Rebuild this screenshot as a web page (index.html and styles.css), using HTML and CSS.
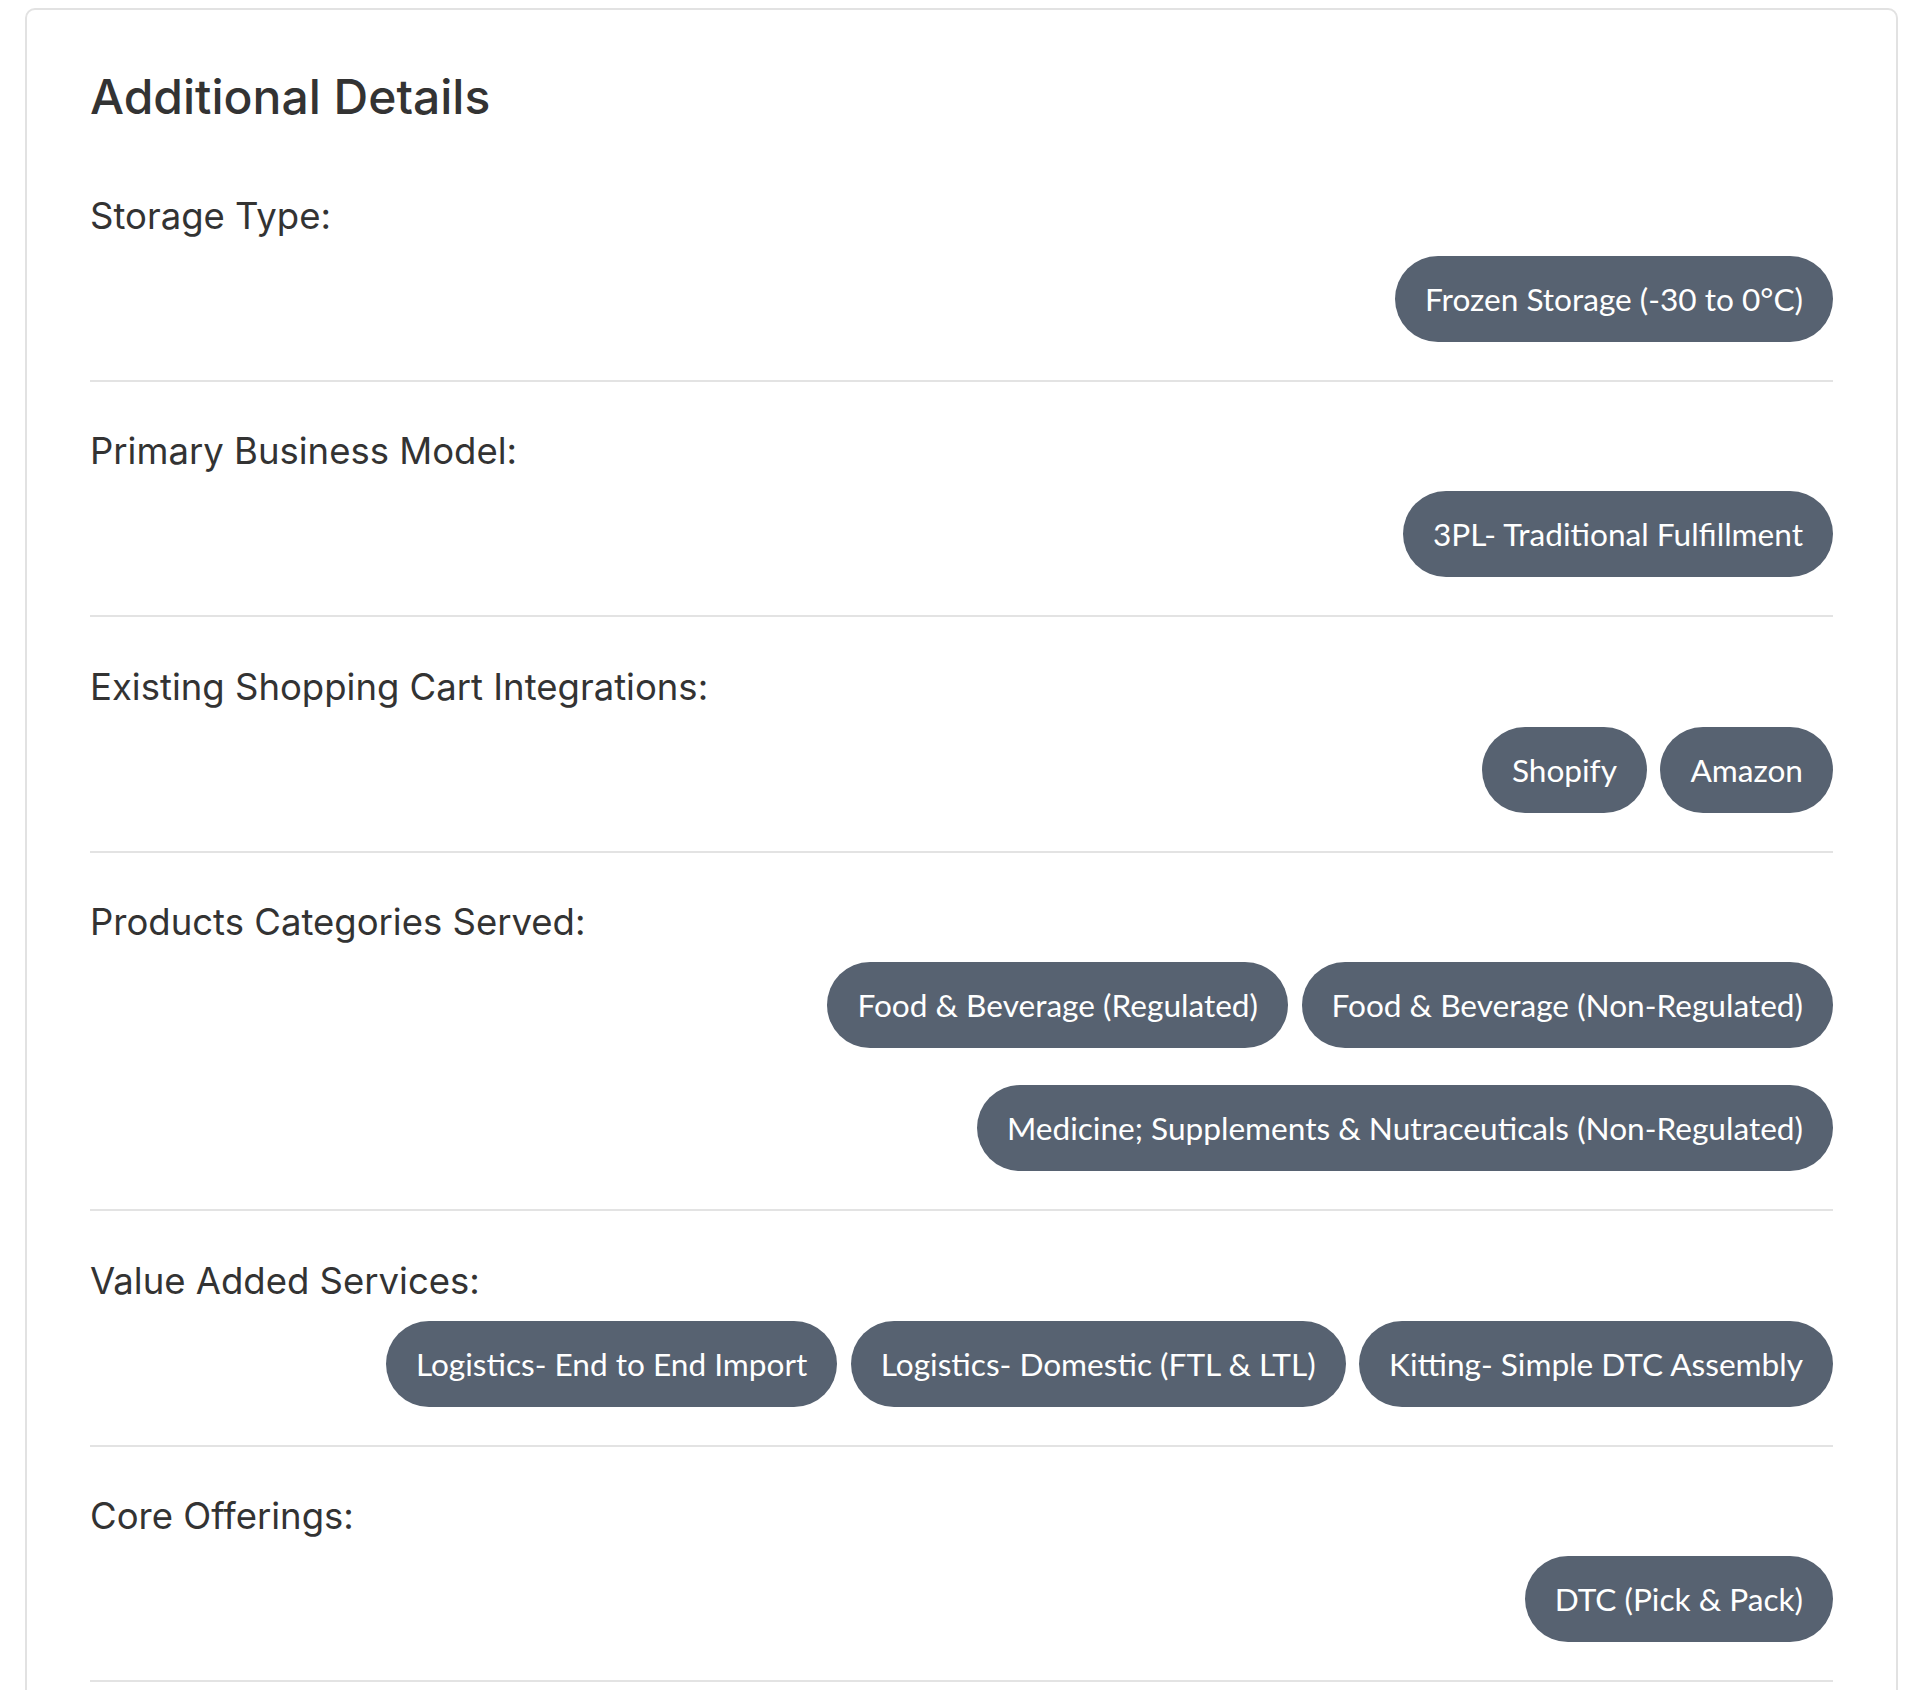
FILE: index.html
```html
<!DOCTYPE html>
<html lang="en">
<head>
<meta charset="utf-8">
<title>Additional Details</title>
<link rel="stylesheet" href="styles.css">
</head>
<body>
<div class="page">
  <div class="card">
    <h2 class="title">Additional Details</h2>

    <div class="section">
      <div class="label">Storage Type:</div>
      <div class="pills">
        <span class="pill">Frozen Storage (-30 to 0°C)</span>
      </div>
    </div>

    <div class="section">
      <div class="label">Primary Business Model:</div>
      <div class="pills">
        <span class="pill">3PL- Traditional Fulfillment</span>
      </div>
    </div>

    <div class="section">
      <div class="label">Existing Shopping Cart Integrations:</div>
      <div class="pills">
        <span class="pill">Shopify</span>
        <span class="pill">Amazon</span>
      </div>
    </div>

    <div class="section">
      <div class="label">Products Categories Served:</div>
      <div class="pills">
        <span class="pill">Food &amp; Beverage (Regulated)</span>
        <span class="pill">Food &amp; Beverage (Non-Regulated)</span>
        <span class="pill">Medicine; Supplements &amp; Nutraceuticals (Non-Regulated)</span>
      </div>
    </div>

    <div class="section">
      <div class="label">Value Added Services:</div>
      <div class="pills">
        <span class="pill">Logistics- End to End Import</span>
        <span class="pill">Logistics- Domestic (FTL &amp; LTL)</span>
        <span class="pill">Kitting- Simple DTC Assembly</span>
      </div>
    </div>

    <div class="section">
      <div class="label">Core Offerings:</div>
      <div class="pills">
        <span class="pill">DTC (Pick &amp; Pack)</span>
      </div>
    </div>
  </div>
</div>
</body>
</html>
```

FILE: styles.css
```css
* {
  box-sizing: border-box;
}

html, body {
  margin: 0;
  padding: 0;
  background: #ffffff;
}

body {
  font-family: "Inter", "Noto Sans", "DejaVu Sans", sans-serif;
  color: #333333;
}

.page {
  padding: 8px 22px 0 25px;
}

.card {
  border: 2px solid #e2e2e2;
  border-radius: 10px;
  padding: 0 63px 40px 63px;
  background: #ffffff;
}

.title {
  margin: 59px 0 21px 0;
  font-size: 48px;
  line-height: 56px;
  font-weight: 500;
  color: #333333;
  letter-spacing: 0;
}

.section {
  padding: 47.5px 0 38px 0;
  border-bottom: 2px solid #e3e3e3;
}

.label {
  font-size: 36.5px;
  line-height: 44px;
  font-weight: 400;
  color: #333333;
}

.pills {
  margin-top: 18px;
  display: flex;
  flex-wrap: wrap;
  justify-content: flex-end;
  column-gap: 13.5px;
  row-gap: 37px;
}

.pill {
  display: inline-flex;
  align-items: center;
  height: 86px;
  padding: 0 30px;
  border-radius: 43px;
  background: #576271;
  color: #ffffff;
  font-family: "Lato", "Open Sans", sans-serif;
  font-size: 31.6px;
  font-weight: 400;
  white-space: nowrap;
}
```
